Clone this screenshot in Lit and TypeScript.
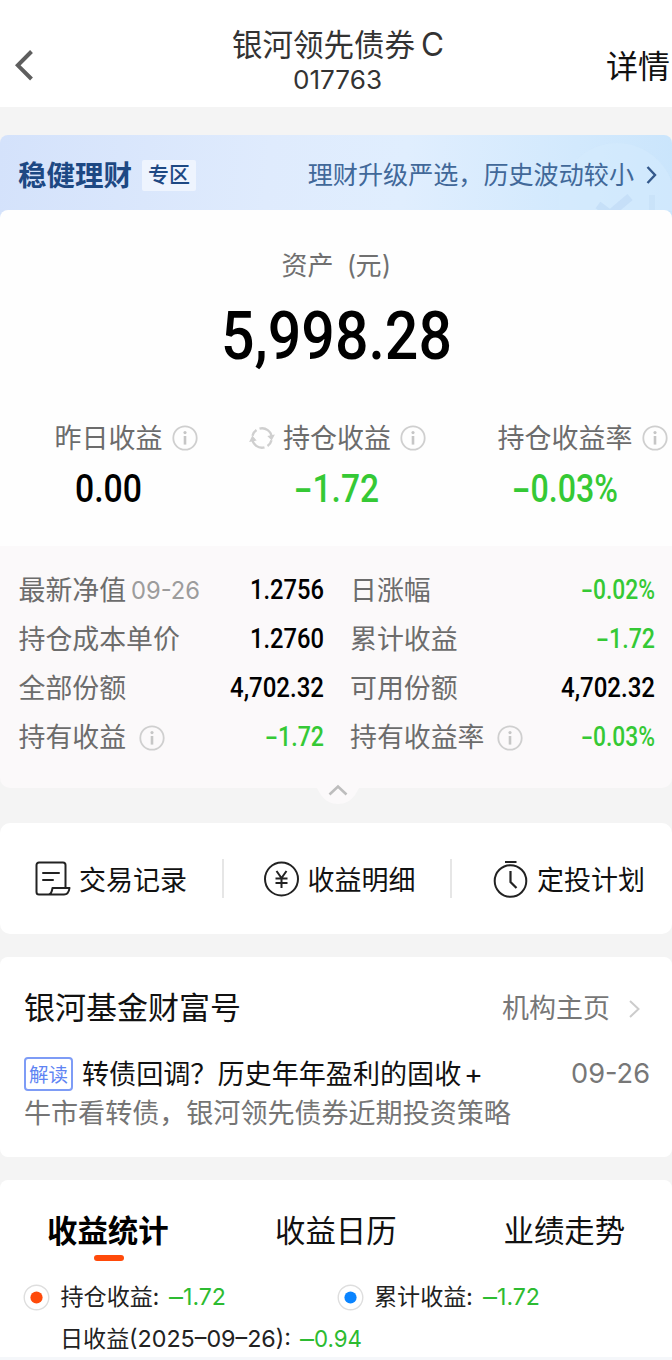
import { LitElement, html, svg, css, nothing } from "lit";
import { customElement, property } from "lit/decorators.js";

/* A figure set to an exact width; a leading minus gets its own share of it. */
@customElement("fit-figure")
class FitFigure extends LitElement {
  static styles = css`
    :host { display: block; flex: none; }
    svg { display: block; overflow: visible; fill: currentColor; }
    .din { font-family: Roboto, sans-serif; font-weight: 500; }
    .sans { font-family: Inter, "Liberation Sans", sans-serif; font-weight: 400; }
  `;
  @property() text = "";
  @property({ type: Number }) width = 60;
  @property({ type: Number }) size = 27;
  @property({ type: Number }) minus = 0;
  @property() face = "din";

  private piece(text: string, x: number, width: number) {
    return svg`<text class=${this.face} x=${x} y=${this.size * 0.857} font-size=${this.size}
      textLength=${width} lengthAdjust="spacingAndGlyphs">${text}</text>`;
  }

  render() {
    const body = this.text.slice(this.minus ? 1 : 0);
    return html`<svg width=${this.width} height=${this.size}>
      ${this.minus ? this.piece(this.text[0], 0, this.minus) : nothing}
      ${this.piece(body, this.minus, this.width - this.minus)}
    </svg>`;
  }
}

const infoIcon = html`<svg class="info" width="26" height="26" viewBox="0 0 26 26" fill="none">
  <circle cx="13" cy="13" r="11.7" stroke="#cfcfcf" stroke-width="1.8" />
  <circle cx="13" cy="7.6" r="1.6" fill="#c6c6c6" />
  <path d="M13 11v8.6" stroke="#c6c6c6" stroke-width="2.6" />
</svg>`;

@customElement("app-root")
class AppRoot extends LitElement {
  static styles = css`
    :host {
      display: block; width: 672px; height: 1360px; overflow: hidden;
      background: #f4f4f4; color: #111;
      font-family: Inter, "Noto Sans CJK SC", sans-serif;
    }
    * { box-sizing: border-box; }
    svg { display: block; flex: none; }
    .cjk { font-family: "Noto Sans CJK SC", sans-serif; white-space: nowrap; padding-bottom: 3px; line-height: 1.3; }
    .header { height: 107px; background: #fff; display: grid; grid-template-columns: 232px 1fr 66px; overflow: hidden; }
    .back { margin: 50px 0 0 15px; }
    .title { padding-top: 26px; color: #333; }
    .name { display: flex; align-items: center; height: 38px; font-size: 30.5px; }
    .name fit-figure { margin: 0 0 0 6px; }
    .code { display: flex; height: 25px; margin: 4px 0 0 61px; }
    .detail { font-size: 32px; padding-top: 42px; line-height: 44px; color: #111; }
    .banner {
      margin-top: 28px; height: 83px; padding: 0 15px 3px 18px; display: flex; align-items: center;
      border-radius: 8px 8px 0 0; overflow: hidden; position: relative;
      background: linear-gradient(95deg, #d4e2fb 0%, #dfebfd 40%, #e0eefe 60%, #d2e9fd 85%, #cae5fc 100%);
    }
    .art { position: absolute; right: 0; top: 0; }
    .b1 { font-size: 28.5px; font-weight: 700; color: #1d4883; }
    .b2 { margin-left: 10px; width: 54px; height: 31px; background: #eef4fe; border-radius: 2px; display: flex; align-items: center; justify-content: center; font-size: 21px; font-weight: 500; color: #1d4883; }
    .b3 { margin-left: auto; font-size: 25.1px; color: #416899; position: relative; }
    .b4 { margin-left: 12px; position: relative; }
    .asset { height: 336px; margin-top: -8px; background: #fefefe; border-radius: 8px 8px 0 0; position: relative; }
    .caption { display: flex; justify-content: center; align-items: center; padding-top: 37px; height: 74px; color: #707070; font-size: 26px; }
    .caption .unit { margin-left: 13px; display: flex; align-items: center; }
    .total { display: flex; justify-content: center; padding-top: 18px; height: 120px; color: #000; }
    .trio { display: grid; grid-template-columns: 215px 252px 1fr; }
    .lab { height: 65px; padding-top: 3px; display: flex; align-items: center; font-size: 27px; color: #6c6c6c; }
    .lab .info { margin-left: 9px; }
    .t1 .lab { padding-left: 54.5px; } .t1 fit-figure { margin-left: 75px; }
    .t2 .lab { padding-left: 34px; } .t2 fit-figure { margin-left: 79px; }
    .t2 .cjk { margin-left: 8px; }
    .t3 .lab { padding-left: 30.5px; } .t3 fit-figure { margin-left: 45px; }
    .black { color: #000; } .green { color: #35c935; }
    .facts {
      height: 242px; background: #fbf9fa; border-radius: 0 0 10px 10px; padding: 20px 17px 0 18.5px;
      display: grid; grid-template-columns: 305.5px 305px; column-gap: 26px; grid-auto-rows: 49px; position: relative;
    }
    .fact { display: flex; align-items: center; font-size: 26.9px; color: #6c6c6c; }
    .fact .end { margin-left: auto; padding-bottom: 2px; }
    .fact .day { color: #9c9c9c; margin-left: 5px; padding-bottom: 1px; }
    .fact .info { margin-left: 13px; }
    .fold { position: absolute; left: 312.5px; top: 220px; }
    .actions { margin-top: 35px; height: 111px; background: #fff; border-radius: 10px; display: grid; grid-template-columns: 224px 228px 1fr; align-items: center; }
    .action { display: flex; align-items: center; height: 39px; font-size: 27px; color: #111; border-right: 2px solid #e6e6e6; }
    .action:last-child { border: 0; }
    .a1 { padding-left: 35px; } .a2 { padding-left: 39.5px; } .a3 { padding-left: 41px; }
    .action .cjk { margin-left: 8px; padding-bottom: 0; }
    .card { background: #fff; border-radius: 8px; }
    .org { margin-top: 23px; height: 200px; padding: 28px 22px 0 24px; }
    .line { display: flex; align-items: center; }
    .org .head { height: 46px; font-size: 31px; color: #111; }
    .org .home { margin-left: auto; font-size: 27px; color: #777; }
    .org .chev { margin: 1px 9px 0 18px; }
    .org .news { margin-top: 20px; height: 46px; font-size: 27.1px; }
    .tag { width: 49px; height: 34px; border: 2px solid #7e9cf6; border-radius: 4px; color: #5f84f3; font-size: 19.5px; display: flex; align-items: center; justify-content: center; }
    .tag .cjk { padding-bottom: 1px; }
    .news .main { margin: 0 3px 0 9px; }
    .news .date { margin-left: auto; color: #777; padding-bottom: 1px; }
    .sub { font-size: 27.05px; color: #757575; line-height: 30px; }
    .stats { margin-top: 23px; height: 177px; border-radius: 8px 8px 0 0; }
    .tabs { display: grid; grid-template-columns: 228px 228.5px 1fr; padding: 27px 0 0 47px; height: 75px; font-size: 30.4px; }
    .tabs .cjk { line-height: 44px; }
    .on { font-weight: 700; color: #000; }
    .bar { width: 30px; height: 6px; border-radius: 3px; background: #ff4a0a; margin-left: 94px; }
    .legend { display: grid; grid-template-columns: 313.5px 1fr; padding: 16px 0 0 23px; }
    .item { display: flex; align-items: center; height: 40px; font-size: 23.1px; color: #222; }
    .item .cjk { margin-left: 10.5px; padding-bottom: 3px; }
    .item fit-figure { margin-left: 10px; }
    .daily fit-figure { margin-left: 9px; }
    .daily { display: flex; align-items: center; height: 43px; padding-left: 60px; font-size: 23.1px; color: #222; }
    .daily .cjk { padding-bottom: 2px; }
    .daily .dates { margin-left: 0; }
    .g2 { color: #2dbb31; }
    .foot { height: 3px; background: #f5f7fa; }
  `;

  private fact(label: string, value: string, width: number, minus = 0, day = false, info = false) {
    return html`<div class="fact">
      <span class="cjk">${label}</span>
      ${day ? html`<fit-figure class="day" face="sans" text="09-26" width="69" size="24"></fit-figure>` : nothing}
      ${info ? infoIcon : nothing}
      <fit-figure class="end ${minus ? "green" : "black"}" text=${value} width=${width} size="27" minus=${minus}></fit-figure>
    </div>`;
  }

  private dot(color: string) {
    return svg`<svg width="27" height="27" viewBox="0 0 27 27"><circle cx="13.5" cy="13.5" r="12.3" fill="#fff" stroke="#dedede" stroke-width="1.4"/><circle cx="13.5" cy="13.5" r="6.1" fill=${color}/></svg>`;
  }

  render() {
    return html`
      <div class="header">
        <svg class="back" width="20" height="32" viewBox="0 0 20 32" fill="none"><path d="M16.5 1.5 2.8 15.3 16.5 29" stroke="#5e5e5e" stroke-width="4" /></svg>
        <div class="title">
          <div class="name"><span class="cjk">银河领先债券</span><fit-figure face="sans" text="C" width="23" size="32"></fit-figure></div>
          <div class="code"><fit-figure face="sans" text="017763" width="89" size="25"></fit-figure></div>
        </div>
        <div class="detail cjk">详情</div>
      </div>

      <div class="banner">
        <svg class="art" width="160" height="76" viewBox="0 0 160 76" fill="none">
          <circle cx="105" cy="66" r="58" fill="#d6ebfd" opacity=".5" />
          <path d="m86 70 12 9 20-17" stroke="#b9d6f3" stroke-width="8" opacity=".5" />
          <path d="M140 76V60" stroke="#b9d6f3" stroke-width="6" opacity=".3" />
        </svg>
        <span class="cjk b1">稳健理财</span>
        <span class="b2"><span class="cjk">专区</span></span>
        <span class="cjk b3">理财升级严选，历史波动较小</span>
        <svg class="b4" width="11" height="18" viewBox="0 0 11 18" fill="none"><path d="m1.5 1 7.5 8-7.5 8" stroke="#34598c" stroke-width="2.4" /></svg>
      </div>

      <div class="asset">
        <div class="caption">
          <span class="cjk">资产</span>
          <span class="unit"><fit-figure face="sans" text="(" width="9" size="27"></fit-figure><span class="cjk">元</span><fit-figure face="sans" text=")" width="9" size="27"></fit-figure></span>
        </div>
        <div class="total"><fit-figure text="5,998.28" width="231" size="66.5"></fit-figure></div>
        <div class="trio">
          <div class="t1">
            <div class="lab"><span class="cjk">昨日收益</span>${infoIcon}</div>
            <fit-figure class="black" text="0.00" width="67" size="38.5"></fit-figure>
          </div>
          <div class="t2">
            <div class="lab">
              <svg width="26" height="26" viewBox="0 0 26 26" fill="none">
                <path d="M10.5 3.6A9.7 9.7 0 0 1 22.7 12.5M15.5 22.4A9.7 9.7 0 0 1 3.3 13.5M3.5 10.8A9.7 9.7 0 0 1 7.5 5M22.5 15.2A9.7 9.7 0 0 1 18.5 21" stroke="#cfcfcf" stroke-width="2.4" />
                <path d="m18.3 11 7.6-1.5-3.2 6zM7.7 15.5.1 17l3.2-6.5z" fill="#cfcfcf" />
              </svg>
              <span class="cjk">持仓收益</span>${infoIcon}
            </div>
            <fit-figure class="green" text="-1.72" width="85" size="38.5" minus="18.5"></fit-figure>
          </div>
          <div class="t3">
            <div class="lab"><span class="cjk">持仓收益率</span>${infoIcon}</div>
            <fit-figure class="green" text="-0.03%" width="106" size="38.5" minus="18.5"></fit-figure>
          </div>
        </div>
      </div>

      <div class="facts">
        ${this.fact("最新净值", "1.2756", 74, 0, true)}
        ${this.fact("日涨幅", "-0.02%", 74, 12)}
        ${this.fact("持仓成本单价", "1.2760", 74)}
        ${this.fact("累计收益", "-1.72", 59, 13)}
        ${this.fact("全部份额", "4,702.32", 94)}
        ${this.fact("可用份额", "4,702.32", 94)}
        ${this.fact("持有收益", "-1.72", 59, 13, false, true)}
        ${this.fact("持有收益率", "-0.03%", 74, 12, false, true)}
        <svg class="fold" width="50" height="42" viewBox="0 0 50 42" fill="none">
          <path d="M0 20h50c-4 1-5 4-8 9-8 12-26 12-34 0-3-5-4-8-8-9z" fill="#fbf9fa" />
          <path d="m16.5 28.5 8.5-8 8.5 8" stroke="#bdbdbd" stroke-width="2.6" />
        </svg>
      </div>

      <div class="actions">
        <div class="action a1">
          <svg width="36" height="36" viewBox="0 0 36 36" fill="none" stroke="#222" stroke-width="2" stroke-linejoin="round">
            <path d="M30.5 26.5V4a2.5 2.5 0 0 0-2.5-2.5H4A2.5 2.5 0 0 0 1.500 4v27A2.500 2.500 0 0 0 4 33.500H29c3 0 5-2.500 5.500-6.500H17.500c-.5 3.500-1 6.500-4 6.500" />
            <path d="M8 12h16M8 19h10" stroke-linecap="round" />
          </svg>
          <span class="cjk">交易记录</span>
        </div>
        <div class="action a2">
          <svg width="36" height="36" viewBox="0 0 36 36" fill="none" stroke="#222" stroke-width="2">
            <circle cx="17.500" cy="18" r="16.500" />
            <path d="m12.500 10 5 7 5-7M17.500 17v10M11.500 17.500h12M11.500 22h12" />
          </svg>
          <span class="cjk">收益明细</span>
        </div>
        <div class="action a3">
          <svg width="36" height="38" viewBox="0 0 36 38" fill="none" stroke="#222" stroke-width="2">
            <circle cx="17.500" cy="21" r="15.800" />
            <path d="M17.500 11v11l6 6M12 2h11.500" stroke-width="2.200" />
          </svg>
          <span class="cjk">定投计划</span>
        </div>
      </div>

      <div class="card org">
        <div class="line head">
          <span class="cjk">银河基金财富号</span>
          <span class="cjk home">机构主页</span>
          <svg class="chev" width="13" height="20" viewBox="0 0 13 20" fill="none"><path d="m2 2 8.500 8L2 18" stroke="#ccc" stroke-width="2" /></svg>
        </div>
        <div class="line news">
          <span class="tag"><span class="cjk">解读</span></span>
          <span class="cjk main">转债回调？历史年年盈利的固收</span><fit-figure face="sans" text="+" width="19" size="27"></fit-figure>
          <fit-figure class="date" face="sans" text="09-26" width="79" size="27"></fit-figure>
        </div>
        <div class="cjk sub">牛市看转债，银河领先债券近期投资策略</div>
      </div>

      <div class="card stats">
        <div class="tabs">
          <span class="cjk on">收益统计</span><span class="cjk">收益日历</span><span class="cjk">业绩走势</span>
        </div>
        <div class="bar"></div>
        <div class="legend">
          <div class="item">${this.dot("#ff4a0a")}<span class="cjk">持仓收益:</span><fit-figure class="g2" face="sans" text="–1.72" width="57" size="23.5" minus="14"></fit-figure></div>
          <div class="item">${this.dot("#0a84ff")}<span class="cjk">累计收益:</span><fit-figure class="g2" face="sans" text="–1.72" width="57" size="23.5" minus="14"></fit-figure></div>
        </div>
        <div class="daily">
          <span class="cjk">日收益</span><fit-figure class="dates" face="sans" text="(2025–09–26):" width="162" size="23.5"></fit-figure>
          <fit-figure class="g2" face="sans" text="–0.94" width="62" size="23.5" minus="14"></fit-figure>
        </div>
      </div>
      <div class="foot"></div>
    `;
  }
}
